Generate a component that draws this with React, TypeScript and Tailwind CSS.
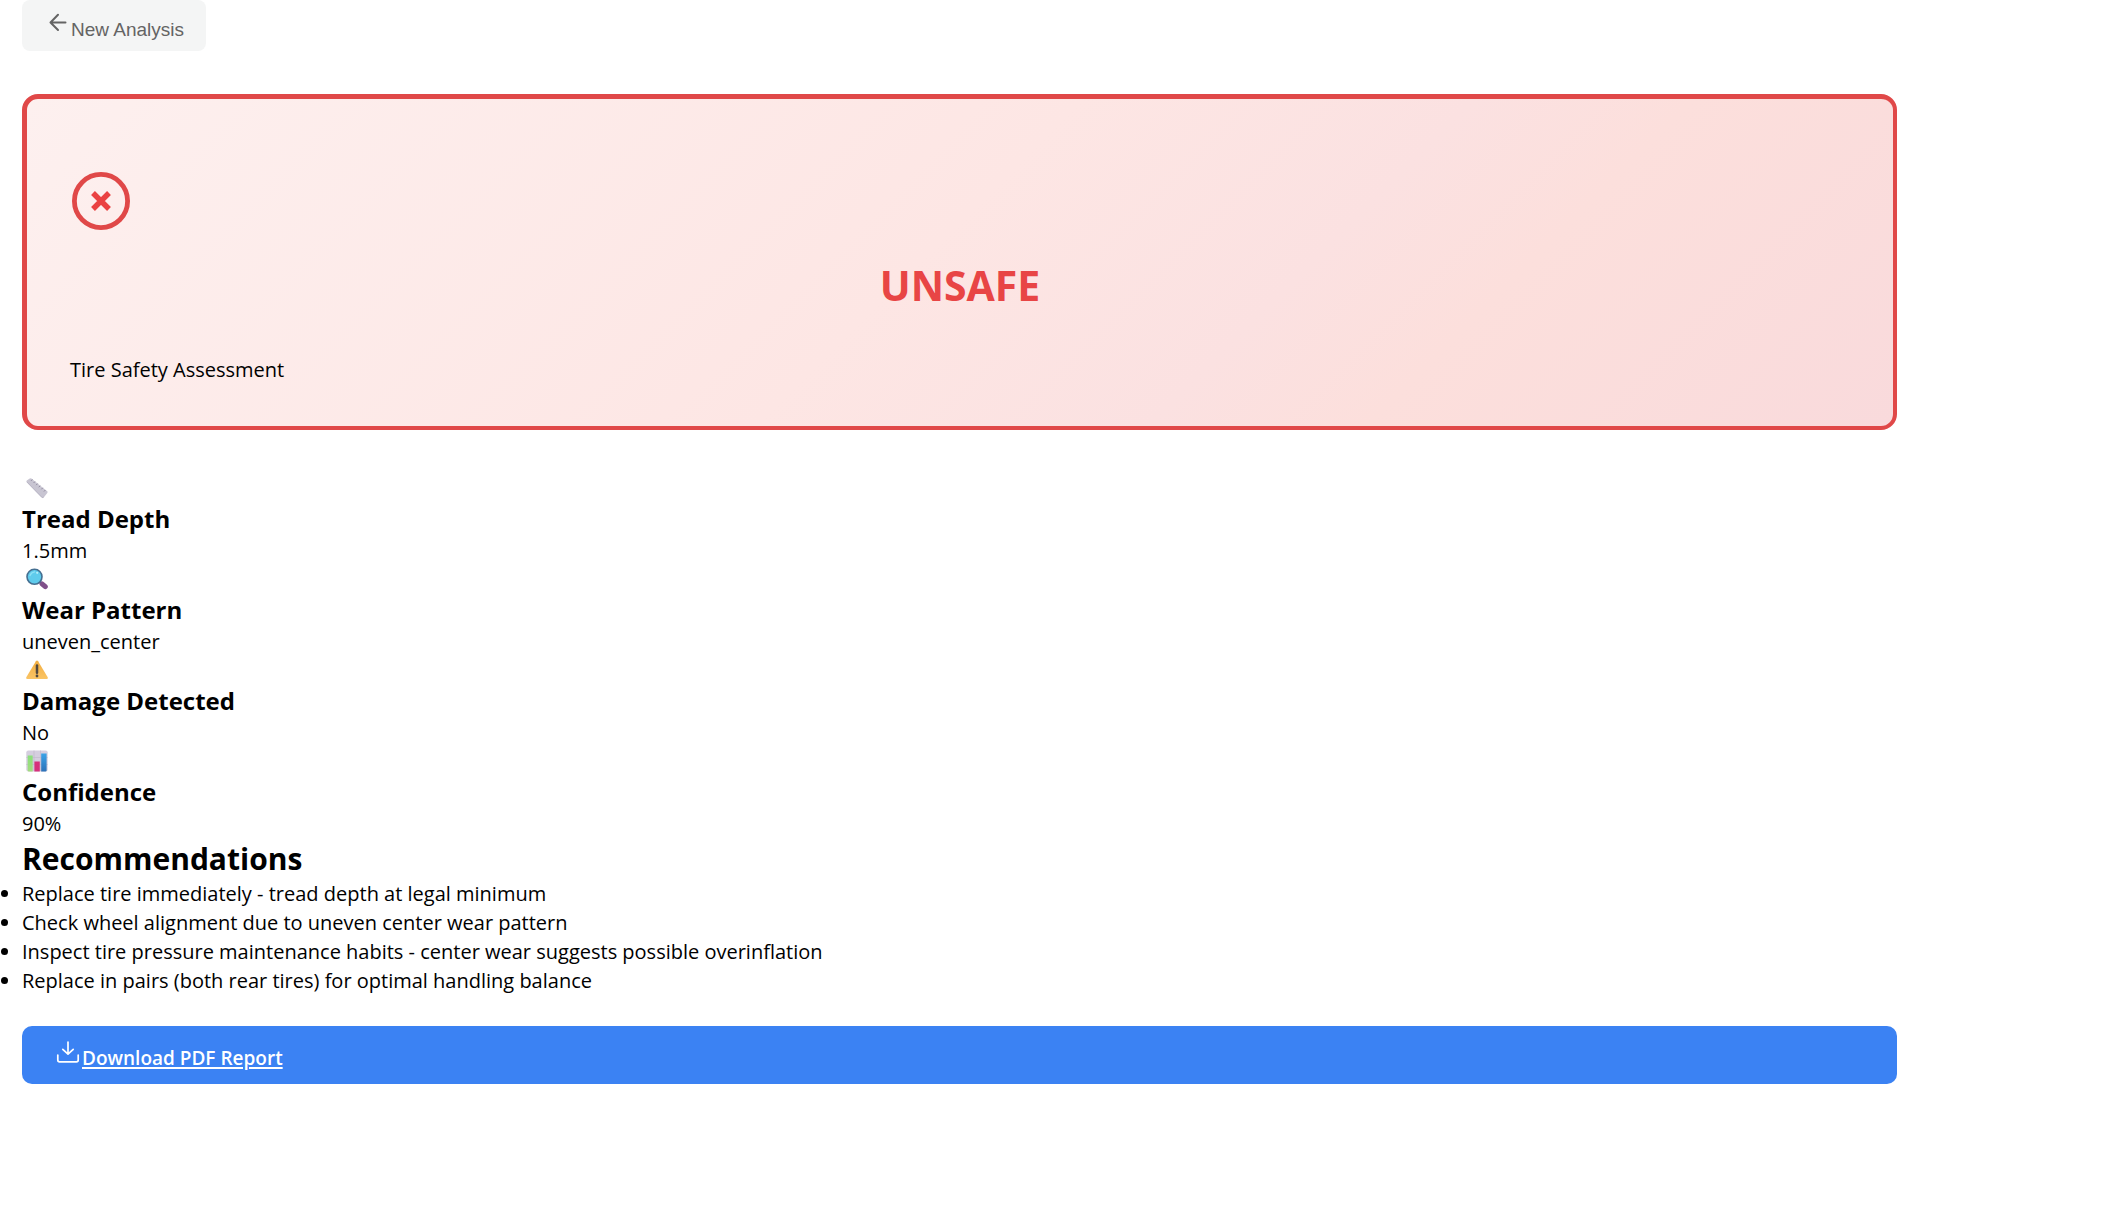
import React from "react";

function ArrowLeftIcon() {
  return (
    <svg className="h-[20px] w-[18px] shrink-0" viewBox="0 0 18 20" fill="none" stroke="currentColor" strokeWidth="2" strokeLinecap="round" strokeLinejoin="round" aria-hidden="true">
      <path d="M16.5 10.5H1.5M9 2.8L1.5 10.5L9 18" />
    </svg>
  );
}

function UnsafeIcon() {
  return (
    <svg className="size-[58px]" viewBox="0 0 58 58" fill="none" stroke="#e04848" aria-hidden="true">
      <circle cx="29" cy="29" r="26.6" strokeWidth="4.8" />
      <path d="M21 21L37 37M37 21L21 37" stroke="#ea4242" strokeWidth="5.4" />
    </svg>
  );
}

function RulerIcon() {
  return (
    <svg className="size-[22px]" viewBox="0 0 22 22" aria-hidden="true">
      <path d="M.6 5.1Q.1 4.3 .8 3.6L3.7 1.4Q4.5 .9 5.4 1.4L21.3 14.3Q22 15.1 21.3 15.9L17.7 20.5Q16.8 21.4 15.7 20.6Z" fill="#c8c5d2" />
      <path d="M.8 4.9L15.7 20.2Q16.8 21 17.7 20" stroke="#b3afbf" strokeWidth=".8" fill="none" />
      <path d="M6.4 2.4L5 3.9M9 4.5L7.6 6M11.6 6.6L10.2 8.1M14.2 8.7L12.8 10.2M16.8 10.8L15.4 12.3M19.4 13L18 14.5" stroke="#8a8498" strokeWidth=".9" />
    </svg>
  );
}

function MagnifierIcon() {
  return (
    <svg className="size-[22px]" viewBox="0 0 22 22" aria-hidden="true">
      <path d="M13 13L15.3 15.3" stroke="#6f5a78" strokeWidth="2.4" />
      <path d="M16 15.8L19.3 18.7" stroke="#80508a" strokeWidth="5" strokeLinecap="round" />
      <circle cx="8.5" cy="8.8" r="7.5" fill="#5fcbec" stroke="#456f91" strokeWidth="1.6" />
      <path d="M4 7.5Q5.2 4.2 8.6 3.9" stroke="#8de1f6" strokeWidth="1.3" strokeLinecap="round" fill="none" />
      <circle cx="11.2" cy="4.8" r="1.1" fill="#b5eefa" />
    </svg>
  );
}

function WarningIcon() {
  return (
    <svg className="size-[22px]" viewBox="0 0 22 22" aria-hidden="true">
      <defs>
        <linearGradient id="warning-fill" x1="0" y1="0" x2="0" y2="1">
          <stop offset="0" stopColor="#f2ad3f" />
          <stop offset="1" stopColor="#fac465" />
        </linearGradient>
      </defs>
      <path d="M9.9 2.2Q11 .6 12.1 2.2L21.7 18.3Q22.3 20 20.7 20H1.3Q-.3 20 .3 18.3Z" fill="url(#warning-fill)" />
      <path d="M11 6.5V13.7" stroke="#51483f" strokeWidth="2.5" strokeLinecap="round" />
      <circle cx="11" cy="17" r="1.4" fill="#51483f" />
    </svg>
  );
}

function ChartIcon() {
  return (
    <svg className="size-[22px]" viewBox="0 0 22 22" aria-hidden="true">
      <defs>
        <linearGradient id="bar-green" x1="0" y1="0" x2="0" y2="1">
          <stop offset="0" stopColor="#8be07c" />
          <stop offset="1" stopColor="#a4dc80" />
        </linearGradient>
        <linearGradient id="bar-blue" x1="0" y1="0" x2="0" y2="1">
          <stop offset="0" stopColor="#3ba4e8" />
          <stop offset="1" stopColor="#2d72b8" />
        </linearGradient>
      </defs>
      <rect x=".3" y=".5" width="21.4" height="21" rx="2" fill="#d5cedf" />
      <path d="M.3 7.5H21.7M.3 14.5H21.7M8 .5V21M14.5 .5V21" stroke="#bfb7cb" strokeWidth=".6" />
      <path d="M1.7 5.5H6.7V21.5H2.8Q1.7 21.5 1.7 20.5Z" fill="url(#bar-green)" />
      <path d="M8.4 11.5H13.8V21.5H8.4Z" fill="#d6317b" />
      <path d="M15.2 3.4H20.6V20.5Q20.6 21.5 19.5 21.5H15.2Z" fill="url(#bar-blue)" />
    </svg>
  );
}

function DownloadIcon() {
  return (
    <svg className="h-[22px] w-[24px] shrink-0" viewBox="0 0 24 22" fill="none" stroke="currentColor" strokeWidth="1.7" strokeLinecap="round" strokeLinejoin="round" aria-hidden="true">
      <path d="M12 1V13M6.8 8.3L12 13.2L17.2 8.3M1.8 14V19Q1.8 20.8 3.6 20.8H20.4Q22.2 20.8 22.2 19V14" />
    </svg>
  );
}

const metrics = [
  { icon: <RulerIcon />, title: "Tread Depth", value: "1.5mm" },
  { icon: <MagnifierIcon />, title: "Wear Pattern", value: "uneven_center" },
  { icon: <WarningIcon />, title: "Damage Detected", value: "No" },
  { icon: <ChartIcon />, title: "Confidence", value: "90%" },
];

const recommendations = [
  "Replace tire immediately - tread depth at legal minimum",
  "Check wheel alignment due to uneven center wear pattern",
  "Inspect tire pressure maintenance habits - center wear suggests possible overinflation",
  "Replace in pairs (both rear tires) for optimal handling balance",
];

export default function App() {
  return (
    <main className="min-h-screen bg-white pr-[222px] pl-[22px] font-['Open_Sans',sans-serif] text-[20px] leading-[29px] text-black">
      <button type="button" className="flex h-[51px] items-center gap-1 rounded-lg bg-[#f4f5f5] pr-[22px] pl-[27px] font-['Liberation_Sans',sans-serif] text-[19px] text-[#646464]">
        <span className="pb-[7px]"><ArrowLeftIcon /></span>
        <span className="pt-[7px]">New Analysis</span>
      </button>

      <section className="mt-[43px] rounded-2xl border-4 border-t-5 border-l-5 border-[#e04848] bg-[linear-gradient(135deg,#fdf0ef_0%,#fde6e4_48%,#fbe1e1_66%,#fcdfdc_76%,#f9dadc_100%)] px-[43px] pt-[73px] pb-[42px]">
        <div className="pl-[2px]"><UnsafeIcon /></div>
        <h1 className="mt-7 text-center text-[41px] leading-[54px] font-bold text-[#e84545]">UNSAFE</h1>
        <p className="mt-[43px]">Tire Safety Assessment</p>
      </section>

      <section className="mt-11">
        {metrics.map((m) => (
          <article key={m.title}>
            <div className="flex h-7 items-center pl-1">{m.icon}</div>
            <h3 className="text-[24px] leading-[34px] font-bold">{m.title}</h3>
            <p>{m.value}</p>
          </article>
        ))}
      </section>

      <section>
        <h2 className="text-[30px] leading-[41px] font-bold">Recommendations</h2>
        <ul className="list-disc">
          {recommendations.map((r) => (
            <li key={r}>{r}</li>
          ))}
        </ul>
      </section>

      <a href="#report" className="mt-[31px] flex h-[58px] items-center gap-0.5 rounded-[10px] bg-[#3b82f3] pl-[34px] text-[19px] font-semibold text-white">
        <span className="pb-[6px]"><DownloadIcon /></span>
        <span className="pt-[6px] underline decoration-2 underline-offset-2">Download PDF Report</span>
      </a>
    </main>
  );
}
